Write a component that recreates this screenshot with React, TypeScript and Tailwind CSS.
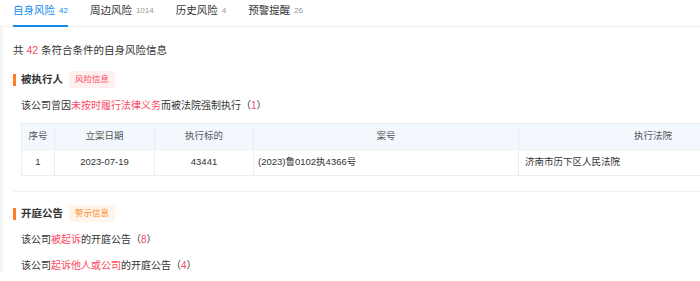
import React from 'react';

const font = { fontFamily: '"Liberation Sans", "Noto Sans CJK SC", sans-serif' };

const tabs = [
    { label: '自身风险', count: '42', active: true },
    { label: '周边风险', count: '1014' },
    { label: '历史风险', count: '4' },
    { label: '预警提醒', count: '26' },
];

const SectionTitle: React.FC<{ title: string; badge: string; tone: 'red' | 'orange' }> = ({ title, badge, tone }) => (
    <div className="flex items-center h-[17px]">
        <span className="w-[3px] h-[12px] bg-[#ff7d26] mr-[5px]"></span>
        <span className="text-[10.5px] font-bold text-[#333] leading-none">{title}</span>
        <span
            className={`ml-[6px] h-[17px] px-[6px] flex items-center text-[8.5px] leading-none ${
                tone === 'red' ? 'bg-[#fff0f0] text-[#fd485e]' : 'bg-[#fff5ea] text-[#ff8b2b]'
            }`}
        >
            {badge}
        </span>
    </div>
);

const Red: React.FC<{ children: React.ReactNode }> = ({ children }) => <span className="text-[#fd485e]">{children}</span>;

export default function App() {
    return (
        <div className="w-[700px] h-[281px] overflow-hidden bg-white text-[#333]" style={font}>
            {/* tabs */}
            <div className="flex gap-[22px] pl-[13px] border-b border-[#eeeeee] h-[27px]">
                {tabs.map((t) => (
                    <div
                        key={t.label}
                        className={`flex items-start pt-[3px] h-[27px] border-b-2 ${t.active ? 'border-[#128bed]' : 'border-transparent'}`}
                    >
                        <span className={`text-[10.5px] leading-[14px] ${t.active ? 'text-[#128bed]' : 'text-[#333]'}`}>{t.label}</span>
                        <span className={`ml-[4px] text-[8px] leading-[15px] ${t.active ? 'text-[#128bed]' : 'text-[#999]'}`}>{t.count}</span>
                    </div>
                ))}
            </div>

            <div className="border-l-[3px] border-[#f4f4f4] pl-[10px]">
                <div className="pt-[16px] text-[10.5px] leading-[14px] text-[#333]">
                    共 <Red>42</Red> 条符合条件的自身风险信息
                </div>

                <div className="mt-[14px]">
                    <SectionTitle title="被执行人" badge="风险信息" tone="red" />
                </div>

                <div className="pl-[8px]">
                    <div className="mt-[11px] text-[10px] leading-[14px]">
                        该公司曾因<Red>未按时履行法律义务</Red>而被法院强制执行（<Red>1</Red>）
                    </div>

                    <table className="mt-[10px] border-collapse text-[9.5px] w-[766px] table-fixed">
                        <colgroup>
                            <col className="w-[33px]" />
                            <col className="w-[100px]" />
                            <col className="w-[99px]" />
                            <col className="w-[265px]" />
                            <col className="w-[269px]" />
                        </colgroup>
                        <thead>
                            <tr className="bg-[#f2f8fe] text-[#555] h-[26px]">
                                <th className="border border-[#e6eef6] font-normal">序号</th>
                                <th className="border border-[#e6eef6] font-normal">立案日期</th>
                                <th className="border border-[#e6eef6] font-normal">执行标的</th>
                                <th className="border border-[#e6eef6] font-normal">案号</th>
                                <th className="border border-[#e6eef6] font-normal">执行法院</th>
                            </tr>
                        </thead>
                        <tbody>
                            <tr className="h-[26px] text-[#333]">
                                <td className="border border-[#e6eef6] text-center">1</td>
                                <td className="border border-[#e6eef6] text-center">2023-07-19</td>
                                <td className="border border-[#e6eef6] text-center">43441</td>
                                <td className="border border-[#e6eef6] pl-[4px]">(2023)鲁0102执4366号</td>
                                <td className="border border-[#e6eef6] pl-[6px]">济南市历下区人民法院</td>
                            </tr>
                        </tbody>
                    </table>
                </div>

                <div className="mt-[15px] border-t border-[#f0f0f0]"></div>

                <div className="mt-[13px]">
                    <SectionTitle title="开庭公告" badge="警示信息" tone="orange" />
                </div>

                <div className="pl-[8px] text-[10px] leading-[14px]">
                    <div className="mt-[11px]">
                        该公司<Red>被起诉</Red>的开庭公告（<Red>8</Red>）
                    </div>
                    <div className="mt-[12px]">
                        该公司<Red>起诉他人或公司</Red>的开庭公告（<Red>4</Red>）
                    </div>
                </div>
            </div>
        </div>
    );
}
